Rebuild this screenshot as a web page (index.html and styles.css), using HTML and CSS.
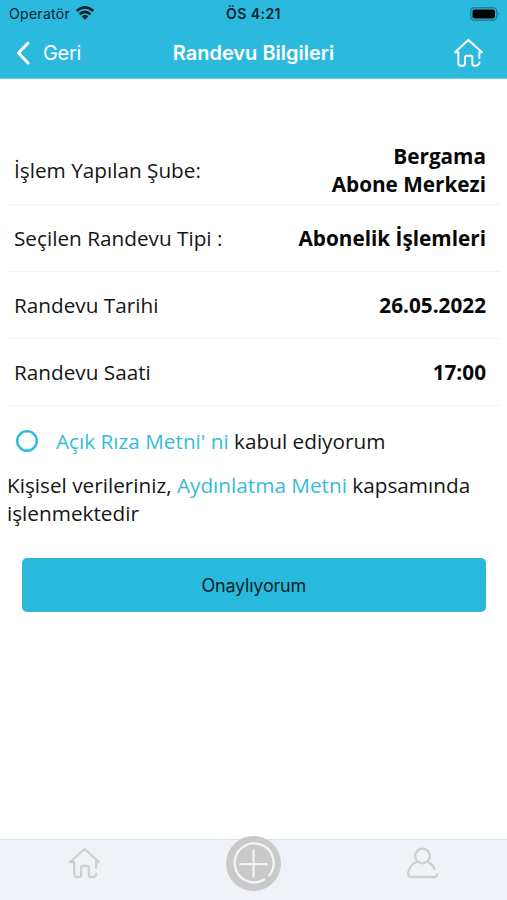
FILE: index.html
```html
<!DOCTYPE html>
<html lang="tr">
<head>
<meta charset="utf-8">
<title>Randevu Bilgileri</title>
<link rel="stylesheet" href="styles.css">
</head>
<body>
<div class="screen">
  <header class="header">
    <div class="status">
      <div class="carrier"><span>Operatör</span>
        <svg class="wifi" viewBox="0 0 54 42"><g fill="none" stroke="#06212a" stroke-width="8"><path d="M2 15Q27 -7 52 15"/><path d="M11 25Q27 10 43 25"/></g><path d="M17 31Q27 22 37 31L27 41Z" fill="#06212a"/></svg>
      </div>
      <div class="time">ÖS 4:21</div>
      <svg class="battery" viewBox="0 0 30 14"><rect x=".75" y=".75" width="26" height="12.5" rx="3.5" fill="none" stroke="#1c8198" stroke-width="1.3"/><rect x="2.5" y="2.5" width="22.5" height="9" rx="2" fill="#000"/><path d="M28 5q2 2 0 4z" fill="#1c8198"/></svg>
    </div>
    <nav class="navbar">
      <a class="back"><svg class="chevron" viewBox="0 0 14 24"><path d="M12 2L2.5 12L12 22" fill="none" stroke="#fff" stroke-width="3" stroke-linecap="round" stroke-linejoin="round"/></svg><span>Geri</span></a>
      <h1 class="title">Randevu Bilgileri</h1>
      <svg class="home" viewBox="0 0 92 90"><path d="M16 43H6L46 6L87 43H79V60M16 43V76Q16 83 23 83H30Q36 83 36 77V58Q36 53 41 53H53Q58 53 58 58V77Q58 83 64 83H69Q77 83 80 73"/></svg>
    </nav>
  </header>
  <main class="content">
    <dl class="details">
      <div class="row"><dt>İşlem Yapılan Şube:</dt><dd>Bergama<br>Abone Merkezi</dd></div>
      <div class="row"><dt>Seçilen Randevu Tipi :</dt><dd>Abonelik İşlemleri</dd></div>
      <div class="row"><dt>Randevu Tarihi</dt><dd>26.05.2022</dd></div>
      <div class="row"><dt>Randevu Saati</dt><dd>17:00</dd></div>
    </dl>
    <label class="consent"><span class="radio"></span><span><a class="link">Açık Rıza Metni' ni</a> kabul ediyorum</span></label>
    <p class="notice">Kişisel verileriniz, <a class="link">Aydınlatma Metni</a> kapsamında<br>işlenmektedir</p>
    <button class="confirm">Onaylıyorum</button>
  </main>
  <footer class="tabs">
    <div class="tab"><svg class="tab-home" viewBox="0 0 98 96"><path d="M18 45H6L49 6L92 45H84V62M18 45V82Q18 90 26 90H34Q39 90 39 84V62Q39 57 44 57H57Q62 57 62 62V84Q62 90 68 90H76Q83 90 84 80"/></svg></div>
    <div class="tab"><svg class="tab-add" viewBox="0 0 164 164"><circle cx="82" cy="82" r="82" fill="#c9c9c9"/><path d="M114 130A58 58 0 1 1 129 117M82 43V121M43 84H121" fill="none" stroke="#f1f3f5" stroke-width="7" stroke-linecap="round"/></svg></div>
    <div class="tab"><svg class="tab-user" viewBox="0 0 96 96"><circle cx="48" cy="27" r="22"/><path d="M34 44Q12 49 5 77Q4 90 15 90H85Q91 89 92 82M62 44Q78 51 84 66"/></svg></div>
  </footer>
</div>
</body>
</html>
```

FILE: styles.css
```css
* { box-sizing: border-box; }
body { margin: 0; background: #fff; }
.screen { width: 507px; height: 900px; display: flex; flex-direction: column; font-family: "Open Sans", "Noto Sans", sans-serif; color: #151515; overflow: hidden; }
.header { height: 79px; background: #2bbade; border-bottom: 1px solid #70d0e9; font-family: Inter, "Liberation Sans", sans-serif; }
.status { height: 27px; padding: 0 7px 0 9px; display: grid; grid-template-columns: 1fr auto 1fr; align-items: center; color: #06212a; }
.carrier { display: flex; align-items: center; gap: 6px; font-size: 14px; letter-spacing: .3px; }
.wifi { width: 18px; height: 14px; position: relative; top: -1px; }
.time { font-size: 14px; font-weight: 600; letter-spacing: .45px; margin-left: -2px; }
.battery { width: 30px; height: 14px; justify-self: end; }
.navbar { height: 51px; padding: 0 23px; display: grid; grid-template-columns: 1fr auto 1fr; align-items: center; color: #fff; }
.back { display: flex; align-items: center; gap: 13px; margin-left: -7px; font-size: 20px; letter-spacing: -.3px; }
.chevron { width: 14px; height: 24px; }
.title { margin: 0; font-size: 20px; font-weight: 600; letter-spacing: 0; }
.home { width: 30.7px; height: 30px; justify-self: end; fill: none; stroke: #fff; stroke-width: 5.8; stroke-linejoin: round; stroke-linecap: round; }
.content { flex: 1; padding: 58px 7px 0; font-size: 20.74px; }
.details { margin: 0; }
.row { height: 67.3px; padding: 0 14px 0 7px; border-bottom: 1px solid #f3f3f3; display: flex; align-items: center; justify-content: space-between; }
.row:first-child { height: 67.6px; }
.row dd { margin: 0; font-weight: 700; text-align: right; line-height: 28px; color: #080808; }
.consent { height: 69px; padding-left: 9px; display: flex; align-items: center; gap: 18px; }
.radio { width: 22px; height: 22px; border: 2px solid #2bbade; border-radius: 50%; box-shadow: inset 0 0 0 .5px #2bbade; }
.link { color: #35bbdc; }
.notice { margin: -4.5px 0 0; line-height: 28px; }
.confirm { display: block; width: 464.5px; height: 53.5px; margin: 31.5px 0 0 14.5px; border: 0; border-radius: 5px; background: #29b9dd; color: #09232b; font: 18px Inter, "Liberation Sans", sans-serif; letter-spacing: -.2px; }
.tabs { height: 61px; background: #eff3f7; border-top: 1px solid #dcdfe1; display: grid; grid-template-columns: repeat(3, 1fr); justify-items: center; }
.tab-home, .tab-user { display: block; margin-top: 7px; width: 33px; height: 32px; fill: none; stroke: #cdcfd0; stroke-width: 7; stroke-linecap: round; stroke-linejoin: round; }
.tab-add { display: block; width: 55px; height: 55px; margin-top: -4px; }
```
